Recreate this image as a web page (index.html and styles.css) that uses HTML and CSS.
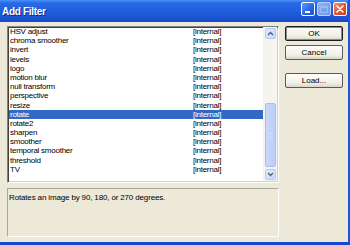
FILE: index.html
```html
<!DOCTYPE html>
<html lang="en">
<head>
  <meta charset="UTF-8" />
  <title>Add Filter</title>
  <link rel="stylesheet" href="styles.css">
</head>
<body>

<div class="window">
  <!-- Заголовок окна -->
  <div class="titlebar">
    <span class="title">Add Filter</span>
    <div class="caption-btns">
      <span class="cap min"><i></i></span>
      <span class="cap max"><i></i></span>
      <span class="cap close">
        <svg width="8" height="8" viewBox="0 0 8 8"><path d="M1 1 L7 7 M7 1 L1 7" stroke="#fff" stroke-width="1.6" stroke-linecap="round"/></svg>
      </span>
    </div>
  </div>

  <div class="client">
    <div class="left">
      <!-- Список фильтров -->
      <div class="listbox">
        <div class="rows">
          <div class="row"><span>HSV adjust</span><span>[internal]</span></div>
          <div class="row"><span>chroma smoother</span><span>[internal]</span></div>
          <div class="row"><span>invert</span><span>[internal]</span></div>
          <div class="row"><span>levels</span><span>[internal]</span></div>
          <div class="row"><span>logo</span><span>[internal]</span></div>
          <div class="row"><span>motion blur</span><span>[internal]</span></div>
          <div class="row"><span>null transform</span><span>[internal]</span></div>
          <div class="row"><span>perspective</span><span>[internal]</span></div>
          <div class="row"><span>resize</span><span>[internal]</span></div>
          <div class="row selected"><span>rotate</span><span>[internal]</span></div>
          <div class="row"><span>rotate2</span><span>[internal]</span></div>
          <div class="row"><span>sharpen</span><span>[internal]</span></div>
          <div class="row"><span>smoother</span><span>[internal]</span></div>
          <div class="row"><span>temporal smoother</span><span>[internal]</span></div>
          <div class="row"><span>threshold</span><span>[internal]</span></div>
          <div class="row"><span>TV</span><span>[internal]</span></div>
        </div>
        <div class="scrollbar">
          <div class="sb-btn">
            <svg width="7" height="5" viewBox="0 0 7 5"><path d="M1 4 L3.5 1.5 L6 4" fill="none" stroke="#4d6185" stroke-width="1.4"/></svg>
          </div>
          <div class="sb-track">
            <div class="thumb"><i></i></div>
          </div>
          <div class="sb-btn">
            <svg width="7" height="5" viewBox="0 0 7 5"><path d="M1 1 L3.5 3.5 L6 1" fill="none" stroke="#4d6185" stroke-width="1.4"/></svg>
          </div>
        </div>
      </div>

      <!-- Описание -->
      <div class="desc">Rotates an image by 90, 180, or 270 degrees.</div>
    </div>

    <div class="buttons">
      <button class="btn default">OK</button>
      <button class="btn">Cancel</button>
      <button class="btn load">Load...</button>
    </div>
  </div>
</div>

</body>
</html>
```

FILE: styles.css
```css
/* Reset */
* {
  margin: 0;
  padding: 0;
  box-sizing: border-box;
}

body {
  width: 350px;
  height: 245px;
  overflow: hidden;
  font-family: 'Liberation Sans', Arial, sans-serif;
  font-size: 8px;
  color: #000;
  background: #ece9d8;
}

/* Окно */
.window {
  width: 350px;
  height: 245px;
  display: flex;
  flex-direction: column;
  background: #ece9d8;
  border-right: 2px solid #1c55dc;
  border-bottom: 3px solid #1747cc;
}

/* Заголовок */
.titlebar {
  height: 22px;
  flex: none;
  display: flex;
  align-items: center;
  justify-content: space-between;
  background: linear-gradient(#4a93f8 0, #2a6ae6 3px, #1f5ddc 55%, #1a53d2 85%, #1548c4 100%);
}

.title {
  padding-left: 2px;
  color: #fff;
  font-weight: bold;
  font-size: 10px;
  letter-spacing: -0.3px;
  text-shadow: 1px 1px 0 #0b2a8a;
}

.caption-btns {
  display: flex;
  gap: 2px;
  margin-right: 1px;
  margin-top: -4px;
}

.cap {
  width: 14px;
  height: 14px;
  border: 1px solid #fff;
  border-radius: 2px;
  position: relative;
  display: flex;
  align-items: center;
  justify-content: center;
}

.cap.min {
  background: linear-gradient(135deg, #5c9cf8, #2762e0 60%, #1f55d3);
}

.cap.min i {
  position: absolute;
  left: 3px;
  top: 8px;
  width: 5px;
  height: 2px;
  background: #fff;
}

.cap.max {
  background: linear-gradient(135deg, #8fb3f4, #6a98ee);
  border-color: #b8cff7;
}

.cap.max i {
  width: 8px;
  height: 7px;
  border: 1px solid #9dbcf3;
  border-top-width: 2px;
}

.cap.close {
  background: linear-gradient(135deg, #f39173, #e0542c 55%, #c9401c);
}

/* Рабочая область */
.client {
  flex: 1;
  display: flex;
  padding: 4px 0 0 7px;
}

.left {
  width: 272px;
  display: flex;
  flex-direction: column;
  gap: 5px;
}

/* Список */
.listbox {
  height: 157px;
  display: flex;
  background: #fff;
  border: 1px solid;
  border-color: #808080 #fff #fff #808080;
  box-shadow: inset 1px 1px 0 #404040, inset -1px -1px 0 #d4d0c8;
  padding: 0 1px 1px 1px;
}

.rows {
  flex: 1;
  padding-top: 0;
}

.row {
  height: 9.2px;
  line-height: 9.2px;
  display: grid;
  grid-template-columns: 183px 1fr;
  padding-left: 1px;
  letter-spacing: -0.25px;
  white-space: nowrap;
}

.row.selected {
  background: #316ac5;
  color: #fff;
}

/* Полоса прокрутки */
.scrollbar {
  width: 14px;
  display: flex;
  flex-direction: column;
  background: #f5f4ee;
  padding: 1px 1px 1px 2px;
}

.sb-btn {
  height: 11px;
  flex: none;
  display: flex;
  align-items: center;
  justify-content: center;
  background: linear-gradient(135deg, #e3ebfd, #c6d6fa);
  border: 1px solid #b6c9f4;
  border-radius: 2px;
}

.sb-track {
  flex: 1;
  padding: 64px 0 2px;
}

.thumb {
  height: 64px;
  background: linear-gradient(90deg, #c9d8fc, #bccdf8);
  border: 1px solid #a9bdf0;
  border-radius: 2px;
  display: flex;
  align-items: center;
  justify-content: center;
}

.thumb i {
  width: 4px;
  height: 5px;
  border-top: 1px solid #d8e2fb;
  border-bottom: 1px solid #d8e2fb;
}

/* Описание */
.desc {
  height: 49px;
  padding: 4px 0 0 1px;
  border: 1px solid;
  border-color: #aca899 #fff #fff #aca899;
  letter-spacing: -0.15px;
}

/* Кнопки */
.buttons {
  width: 58px;
  margin-left: 6px;
  display: flex;
  flex-direction: column;
  gap: 4px;
}

.btn {
  height: 15px;
  font-family: 'Liberation Sans', Arial, sans-serif;
  font-size: 8px;
  color: #000;
  background: linear-gradient(#fefefd, #f1efe7 70%, #d9d4c6);
  border: 1px solid #5b5b5b;
  border-radius: 2px;
}

.btn.default {
  border-color: #1e1e1e;
  box-shadow: inset 0 0 0 1px #8a8a8a;
}

.btn.load {
  margin-top: 9px;
}
```
